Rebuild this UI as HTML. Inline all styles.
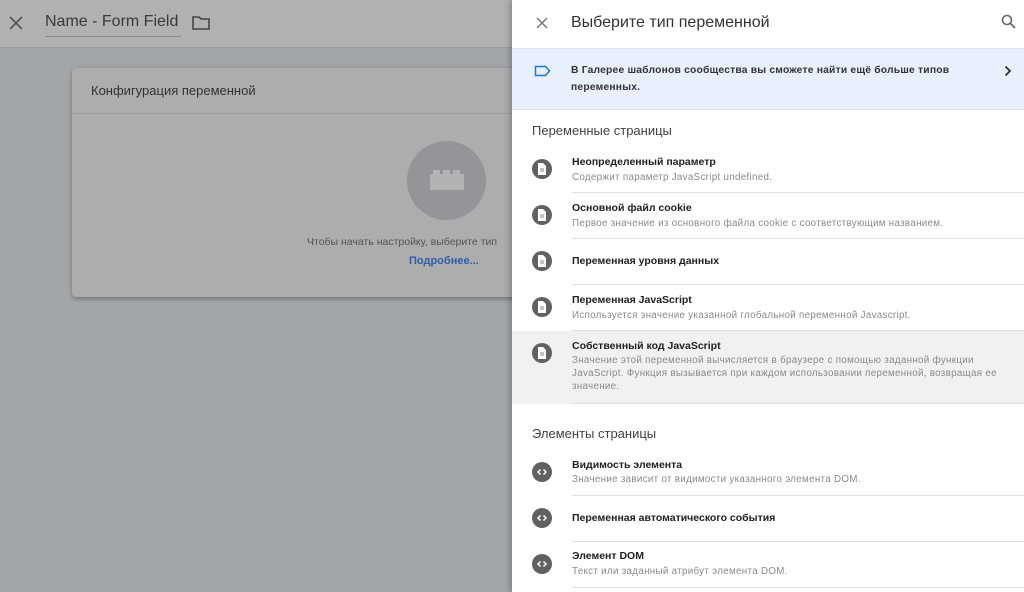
<!DOCTYPE html>
<html><head><meta charset="utf-8"><style>
*{margin:0;padding:0;box-sizing:border-box}
body{width:1024px;height:592px;overflow:hidden;position:relative;font-family:"Liberation Sans",Arial,sans-serif;background:#a4a5a7}
.a{position:absolute}
.hdr{left:0;top:0;width:512px;height:48px;background:#b1b1b1;border-bottom:1px solid #9c9c9c}
.card{left:72px;top:68px;width:460px;height:229px;background:#adadad;border-radius:4px;box-shadow:0 2px 5px rgba(0,0,0,.3)}
.panel{left:512px;top:0;width:512px;height:592px;background:#fff;box-shadow:-2px 0 6px rgba(0,0,0,.25)}
.t{font-size:10.5px;font-weight:bold;color:#212121;left:572px}
.d{font-size:9.8px;letter-spacing:0.3px;color:#8a8a8a;left:572px;line-height:13px}
.sep{left:572px;width:452px;height:1px;background:#e0e0e0}
.ic{left:532px;width:20px;height:20px;border-radius:50%;background:#616161}
.sec{left:532px;font-size:13px;color:#424242}
</style></head><body>
<div class="a hdr"></div>
<svg class="a" style="left:9px;top:16px" width="14" height="14" viewBox="0 0 14 14"><path d="M1 1L13 13M13 1L1 13" stroke="#555" stroke-width="1.6"/></svg>
<div class="a" style="left:45px;top:13px;font-size:16px;color:#3a3a3a">Name - Form Field</div>
<div class="a" style="left:45px;top:36px;width:136px;height:1px;background:#8d8d8d"></div>
<svg class="a" style="left:192px;top:15px" width="18" height="15" viewBox="0 0 18 15"><path d="M1 2h6l2 2h8v10H1z" fill="none" stroke="#444" stroke-width="1.6"/></svg>
<div class="a card"></div>
<div class="a" style="left:72px;top:113px;width:440px;height:1px;background:#9f9f9f"></div>
<div class="a" style="left:91px;top:83px;font-size:13px;color:#333">Конфигурация переменной</div>
<div class="a" style="left:407px;top:141px;width:79px;height:79px;border-radius:50%;background:#959597"></div>
<svg class="a" style="left:430px;top:170px" width="34" height="20" viewBox="0 0 34 20"><path d="M0 4h3V0h7v4h3V0h7v4h3V0h7v4h4v16H0z" fill="#b3b3b3"/></svg>
<div class="a" style="left:307px;top:236px;font-size:10.5px;color:#555">Чтобы начать настройку, выберите тип</div>
<div class="a" style="left:409px;top:255px;font-size:11px;font-weight:bold;color:#2d5ea8">Подробнее...</div>

<div class="a panel"></div>
<svg class="a" style="left:536px;top:17px" width="12" height="12" viewBox="0 0 12 12"><path d="M1 1L11 11M11 1L1 11" stroke="#757575" stroke-width="1.5"/></svg>
<div class="a" style="left:571px;top:14px;font-size:16px;color:#333">Выберите тип переменной</div>
<svg class="a" style="left:1001px;top:14px" width="15" height="15" viewBox="0 0 15 15"><circle cx="6" cy="6" r="4.5" fill="none" stroke="#666" stroke-width="1.6"/><path d="M9.5 9.5L14 14" stroke="#666" stroke-width="1.8"/></svg>
<div class="a" style="left:512px;top:48px;width:512px;height:62px;background:#e8f0fe;border-top:1px solid #dde3ee;border-bottom:1px solid #dde3ee"></div>
<svg class="a" style="left:534px;top:65px" width="17" height="12" viewBox="0 0 17 12"><path d="M1.5 1.5h10l4 4.5-4 4.5h-10z" fill="none" stroke="#1a73e8" stroke-width="1.5"/></svg>
<div class="a" style="left:571px;top:62px;font-size:10.3px;letter-spacing:0.2px;font-weight:bold;color:#333;line-height:17px;width:420px">В Галерее шаблонов сообщества вы сможете найти ещё больше типов<br>переменных.</div>
<svg class="a" style="left:1004px;top:65px" width="8" height="12" viewBox="0 0 8 12"><path d="M1.5 1.5L6 6l-4.5 4.5" fill="none" stroke="#333" stroke-width="1.8"/></svg>
<div class="a sec" style="top:123px">Переменные страницы</div>

<div class="a" style="left:512px;top:331px;width:512px;height:73px;background:#f1f1f2"></div>

<div class="a t" style="top:156px">Неопределенный параметр</div><div class="a d" style="top:171px">Содержит параметр JavaScript undefined.</div>
<div class="a sep" style="top:192px"></div>
<div class="a t" style="top:202px">Основной файл cookie</div><div class="a d" style="top:217px">Первое значение из основного файла cookie с соответствующим названием.</div>
<div class="a sep" style="top:238px"></div>
<div class="a t" style="top:255px">Переменная уровня данных</div>
<div class="a sep" style="top:284px"></div>
<div class="a t" style="top:294px">Переменная JavaScript</div><div class="a d" style="top:309px">Используется значение указанной глобальной переменной Javascript.</div>
<div class="a sep" style="top:330px"></div>
<div class="a t" style="top:340px">Собственный код JavaScript</div><div class="a d" style="top:354px;width:440px">Значение этой переменной вычисляется в браузере с помощью заданной функции<br>JavaScript. Функция вызывается при каждом использовании переменной, возвращая ее<br>значение.</div>
<div class="a sep" style="top:403px"></div>
<div class="a sec" style="top:426px">Элементы страницы</div>
<div class="a t" style="top:459px">Видимость элемента</div><div class="a d" style="top:473px">Значение зависит от видимости указанного элемента DOM.</div>
<div class="a sep" style="top:495px"></div>
<div class="a t" style="top:512px">Переменная автоматического события</div>
<div class="a sep" style="top:541px"></div>
<div class="a t" style="top:550px">Элемент DOM</div><div class="a d" style="top:565px">Текст или заданный атрибут элемента DOM.</div>
<div class="a sep" style="top:587px"></div>

<div class="a ic" style="top:159px"></div><div class="a ic" style="top:205px"></div><div class="a ic" style="top:251px"></div><div class="a ic" style="top:297px"></div><div class="a ic" style="top:343px"></div>
<svg class="a" style="left:537px;top:163px" width="10" height="200" viewBox="0 0 10 200">
<g fill="#fff"><path d="M1 0h5l3 3v9H1z"/><path d="M1 46h5l3 3v9H1z"/><path d="M1 92h5l3 3v9H1z"/><path d="M1 138h5l3 3v9H1z"/><path d="M1 184h5l3 3v9H1z"/></g>
<g stroke="#616161" stroke-width="0.8"><path d="M3 6h4M3 8h4M3 52h4M3 54h4M3 98h4M3 100h4M3 144h4M3 146h4M3 190h4M3 192h4"/></g></svg>
<div class="a ic" style="top:462px"></div><div class="a ic" style="top:508px"></div><div class="a ic" style="top:554px"></div>
<svg class="a" style="left:532px;top:462px" width="20" height="112" viewBox="0 0 20 112"><g fill="none" stroke="#fff" stroke-width="1.5"><path d="M8.5 7.5L6 10l2.5 2.5M11.5 7.5L14 10l-2.5 2.5"/><path d="M8.5 53.5L6 56l2.5 2.5M11.5 53.5L14 56l-2.5 2.5"/><path d="M8.5 99.5L6 102l2.5 2.5M11.5 99.5L14 102l-2.5 2.5"/></g></svg>
</body></html>
